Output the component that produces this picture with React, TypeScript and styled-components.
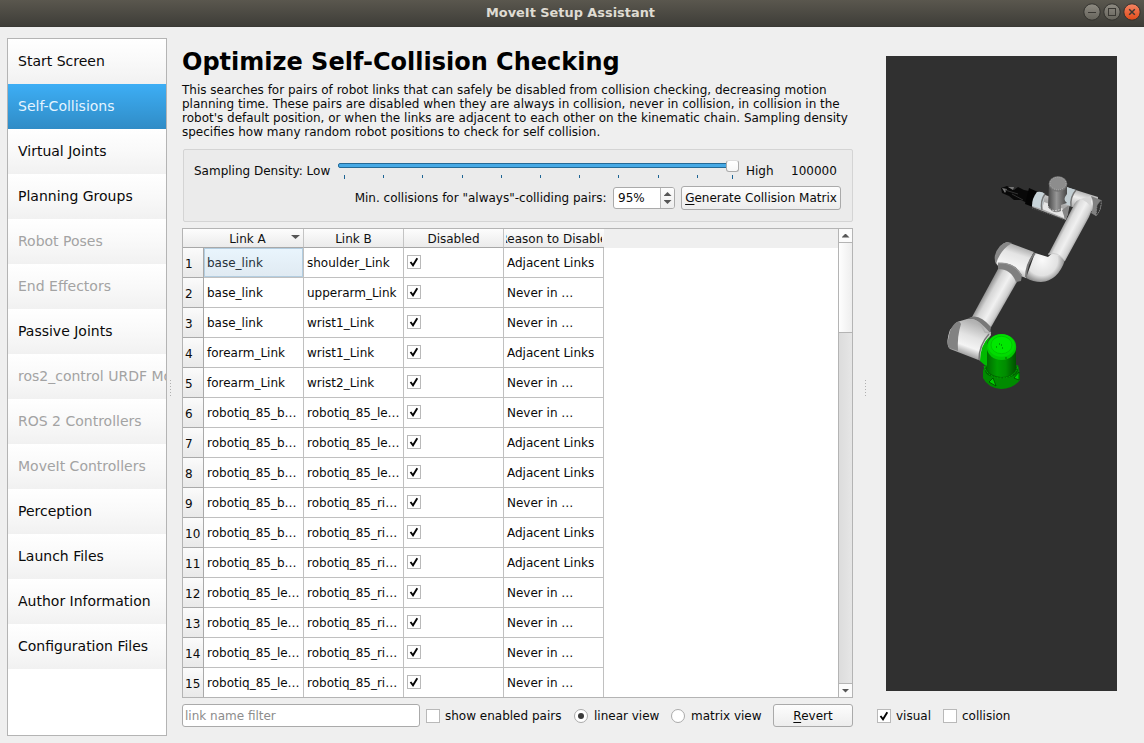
import React from 'react';
import styled, { createGlobalStyle } from 'styled-components';

const GlobalStyle = createGlobalStyle`
  * { box-sizing: border-box; }
  body { margin: 0; background: #efefef; overflow: hidden; }
`;

const Window = styled.div`
  width: 1144px;
  height: 743px;
  display: flex;
  flex-direction: column;
  background: #efefef;
  color: #0a0a0a;
  font: 12px/14px 'DejaVu Sans', sans-serif;
  white-space: nowrap;
`;

const TitleBar = styled.header`
  height: 27px;
  flex: none;
  display: grid;
  grid-template-columns: 1fr auto 1fr;
  padding: 0 3px 2px 0;
  align-items: center;
  background: linear-gradient(#5a574e, #3e3d38);
  border-bottom: 1px solid #3a3935;
  color: #dfdbd2;
  font-weight: bold;
`;

const WindowTitle = styled.span`
  grid-column: 2;
  font-size: 12.9px;
  padding-top: 1px;
`;

const WindowButtons = styled.div`
  display: flex;
  justify-content: flex-end;
  gap: 2px;
`;

const Body = styled.div`
  flex: 1;
  display: flex;
  min-height: 0;
  padding: 11px 27px 0 7px;
`;

const Sidebar = styled.nav`
  width: 160px;
  height: 698px;
  border: 1px solid #b4b4b4;
  background: #fff;
  overflow: hidden;
`;

const NavItem = styled.div<{ $active?: boolean; $muted?: boolean }>`
  height: 45px;
  padding: 0 0 1px 10px;
  display: flex;
  align-items: center;
  font-size: 14px;
  overflow: hidden;
  color: ${(p) => (p.$active ? '#e4f4ff' : p.$muted ? '#a3a3a3' : '#0a0a0a')};
  background: ${(p) =>
    p.$active ? 'linear-gradient(#3daef5, #308cc6)' : 'linear-gradient(#fff, #f9f9f9 50%, #f1f1f1)'};
`;

const Splitter = styled.div<{ $width: number; $left: number }>`
  width: ${(p) => p.$width}px;
  padding: 342px 0 0 ${(p) => p.$left}px;
  flex: none;
`;

const Grip = styled.div`
  width: 1px;
  height: 17px;
  background: repeating-linear-gradient(#b0b0b0 0 1px, transparent 1px 3px);
`;

const Main = styled.main`
  width: 671px;
  display: flex;
  flex-direction: column;
`;

const Heading = styled.h1`
  margin: 0;
  padding-top: 9px;
  height: 45px;
  font-size: 24px;
  line-height: 30px;
  font-weight: bold;
  color: #000;
`;

const Description = styled.p`
  margin: 0;
  height: 56px;
`;

const DensityGroup = styled.section`
  margin: 10px 0 6px 1px;
  height: 73px;
  border: 1px solid #d4d4d4;
  border-radius: 2px;
  background: #ebebeb;
  padding: 9px 11px 0 10px;
`;

const DensityRow = styled.div`
  display: flex;
  height: 27px;
`;

const DensityLabel = styled.span<{ $width: number }>`
  width: ${(p) => p.$width}px;
  padding-top: 5px;
`;

const Slider = styled.div`
  position: relative;
  width: 401px;
  margin-right: 7px;
  padding-top: 4px;
`;

const Track = styled.div`
  height: 5px;
  border: 1px solid #246a97;
  border-radius: 2px;
  background: #46a9e5;
`;

const Handle = styled.div`
  position: absolute;
  right: 0;
  top: 1px;
  width: 13px;
  height: 12px;
  border: 1px solid #aaa;
  border-top-color: #dcdcdc;
  border-radius: 3px;
  background: linear-gradient(#fff, #f6f6f6);
`;

const Ticks = styled.div`
  display: grid;
  grid-template-columns: 39px 39px 40px 39px 39px 39px 39px 40px 39px 35px 1px;
  padding: 7px 0 0 6px;
`;

const Tick = styled.i<{ $long: boolean }>`
  width: 1px;
  height: ${(p) => (p.$long ? 4 : 3)}px;
  background: #1c6494;
`;

const ThresholdRow = styled.div`
  display: flex;
  justify-content: flex-end;
  align-items: center;
  height: 24px;
`;

const SpinBox = styled.div`
  display: flex;
  width: 62px;
  height: 22px;
  margin: 0 6px 0 6.5px;
  border: 1px solid #aaa;
  border-radius: 3px;
  background: #fff;
  overflow: hidden;
`;

const SpinValue = styled.span`
  width: 47px;
  padding: 3px 0 0 4px;
  border-right: 1px solid #b9b9b9;
`;

const SpinArrows = styled.span`
  flex: 1;
  display: flex;
  flex-direction: column;
  align-items: center;
  justify-content: center;
  gap: 4px;
  background: linear-gradient(#fdfdfd, #ededed);
`;

const Arrow = styled.i<{ $up?: boolean }>`
  width: 8px;
  height: 4px;
  background: #555;
  clip-path: ${(p) => (p.$up ? 'polygon(50% 0, 100% 100%, 0 100%)' : 'polygon(0 0, 100% 0, 50% 100%)')};
`;

const PushButton = styled.button<{ $width: number }>`
  width: ${(p) => p.$width}px;
  height: ${(p) => (p.$width > 100 ? 24 : 23)}px;
  padding: 0;
  border: 1px solid #aaa;
  border-radius: 3px;
  background: linear-gradient(#fdfdfd, #ededed);
  color: #0a0a0a;
  font: inherit;
  white-space: nowrap;
`;

const Mnemonic = styled.u`
  text-decoration-thickness: 1px;
  text-underline-offset: 2px;
`;

const TableFrame = styled.section`
  display: flex;
  height: 470px;
  border: 1px solid #b4b4b4;
  background: #fff;
  overflow: hidden;
`;

const TableArea = styled.div`
  flex: 1;
`;

const rowGrid = '21px 100px 100px 100px 100px';

const HeaderRow = styled.div`
  display: grid;
  grid-template-columns: ${rowGrid};
  height: 19px;
  background: #efefef;
`;

const HeaderCell = styled.div<{ $corner?: boolean; $last?: boolean; $sorted?: boolean }>`
  position: relative;
  display: flex;
  justify-content: center;
  overflow: hidden;
  padding: 3px ${(p) => (p.$sorted ? 12 : 0)}px 0 0;
  border-bottom: 1px solid #a8a8a8;
  border-right: ${(p) => (p.$corner || p.$last ? 0 : 1)}px solid #c4c4c4;
  background: linear-gradient(#fdfdfd, #ebebeb);
`;

const HeaderText = styled.span`
  flex: none;
  color: #111;
`;

const ReasonClip = styled.span`
  display: flex;
  justify-content: center;
  width: 96px;
  margin-right: 1px;
  overflow: hidden;
`;

const SortMark = styled(Arrow)`
  position: absolute;
  right: 3px;
  top: 6px;
  width: 9px;
`;

const Row = styled.div`
  display: grid;
  grid-template-columns: ${rowGrid};
  height: 30px;
`;

const RowNumber = styled.div`
  padding: 9px 0 0 2px;
  border-right: 1px solid #aaa;
  border-bottom: 1px solid #aaa;
  background: linear-gradient(#fbfbfb, #e9e9e9);
`;

const Cell = styled.div<{ $selected?: boolean }>`
  padding: 8px 0 0 3px;
  border-right: 1px solid #c0c0c0;
  border-bottom: 1px solid #c0c0c0;
  background: ${(p) => (p.$selected ? 'linear-gradient(#e9f5fd, #e0eaf2)' : '#fff')};
  box-shadow: ${(p) => (p.$selected ? 'inset 0 0 0 1px #b3cde0' : 'none')};
  color: ${(p) => (p.$selected ? '#26313a' : '#0a0a0a')};
`;

const CheckCell = styled(Cell)`
  padding-top: 7px;
`;

const ScrollBar = styled.div`
  width: 14px;
  display: flex;
  flex-direction: column;
  border-left: 1px solid #b4b4b4;
  background: linear-gradient(90deg, #dcdcdc, #e6e6e6);
`;

const ScrollButton = styled.div<{ $bottom?: boolean }>`
  height: 14px;
  display: flex;
  align-items: center;
  justify-content: center;
  background: #fbfbfb;
  border-top: ${(p) => (p.$bottom ? 1 : 0)}px solid #b4b4b4;
  border-bottom: ${(p) => (p.$bottom ? 0 : 1)}px solid #b4b4b4;
`;

const Thumb = styled.div`
  height: 90px;
  margin-bottom: auto;
  border-bottom: 1px solid #b4b4b4;
  background: linear-gradient(90deg, #fefefe, #eee);
`;

const Footer = styled.div`
  display: flex;
  align-items: center;
  height: 23px;
  margin-top: 6px;
`;

const Filter = styled.input`
  width: 238px;
  height: 23px;
  margin-right: 6px;
  padding: 0 2px;
  border: 1px solid #aaa;
  border-radius: 3px;
  background: #fff;
  font: inherit;
  &::placeholder { color: #8c8c8c; opacity: 1; }
`;

const Box = styled.span<{ $round?: boolean }>`
  width: 14px;
  height: 14px;
  flex: none;
  display: flex;
  align-items: center;
  justify-content: center;
  border: 1px solid ${(p) => (p.$round ? '#aaa' : '#b9b9b9')};
  border-radius: ${(p) => (p.$round ? '50%' : '0')};
  background: #fff;
`;

const Dot = styled.i`
  width: 6px;
  height: 6px;
  border-radius: 50%;
  background: #3a3a3a;
`;

const Option = styled.label<{ $width: number; $gap?: number }>`
  display: flex;
  align-items: center;
  gap: ${(p) => p.$gap ?? 5}px;
  width: ${(p) => p.$width}px;
`;

const Preview = styled.aside`
  width: 231px;
  padding-top: 18px;
`;

const Viewport = styled.div`
  height: 635px;
  background: #303030;
`;

const ViewOptions = styled.div`
  display: flex;
  height: 14px;
  margin: 18px 0 0 -9px;
`;

const CheckMark = () => (
  <svg width="12" height="12" viewBox="0 0 12 12" fill="none">
    <path d="M2.5 6 L5 9.3 L9.3 2.2" stroke="#050505" strokeWidth="1.9" />
  </svg>
);

const CheckBox = ({ checked }: { checked?: boolean }) => <Box>{checked && <CheckMark />}</Box>;

const WindowButton = ({ kind }: { kind: 'min' | 'max' | 'close' }) => (
  <svg width="18" height="18" viewBox="0 0 18 18">
    <defs>
      <linearGradient id={`wb-${kind}`} x2="0" y2="1">
        <stop stopColor={kind === 'close' ? '#f58564' : '#8e8b82'} />
        <stop offset="1" stopColor={kind === 'close' ? '#e04a18' : '#65635b'} />
      </linearGradient>
    </defs>
    <circle cx="9" cy="9" r="8.2" fill={`url(#wb-${kind})`} stroke="#33322e" />
    <g fill="none" stroke="#3a3833" strokeWidth="1">
      {kind === 'min' && <path d="M5 9.5H13" />}
      {kind === 'max' && <rect x="5.5" y="5.5" width="7" height="7" />}
      {kind === 'close' && <path d="M6.2 6.2L11.8 11.8M11.8 6.2L6.2 11.8" strokeWidth="1.5" />}
    </g>
  </svg>
);

const Robot = () => (
  <svg width="231" height="635" viewBox="886 56 231 635">
    <defs>
      <linearGradient id="upper" gradientUnits="userSpaceOnUse" x1="983" y1="294" x2="1006" y2="307">
        <stop stopColor="#858585" /><stop offset=".25" stopColor="#d6d6d6" />
        <stop offset=".55" stopColor="#f1f1f1" /><stop offset=".8" stopColor="#cfcfcf" /><stop offset="1" stopColor="#747474" />
      </linearGradient>
      <linearGradient id="fore" gradientUnits="userSpaceOnUse" x1="1060" y1="230" x2="1079" y2="240">
        <stop stopColor="#8f8f8f" /><stop offset=".2" stopColor="#dcdcdc" />
        <stop offset=".5" stopColor="#f0f0f0" /><stop offset=".8" stopColor="#cfcfcf" /><stop offset="1" stopColor="#808080" />
      </linearGradient>
      <linearGradient id="joint" gradientUnits="userSpaceOnUse" x1="1022" y1="246" x2="1012" y2="276">
        <stop stopColor="#a5a5a5" /><stop offset=".3" stopColor="#e4e4e4" />
        <stop offset=".7" stopColor="#f4f4f4" /><stop offset="1" stopColor="#aaa" />
      </linearGradient>
      <radialGradient id="bend" gradientUnits="userSpaceOnUse" cx="1042" cy="260" r="24">
        <stop stopColor="#fafafa" /><stop offset=".65" stopColor="#e2e2e2" /><stop offset="1" stopColor="#7c7c7c" />
      </radialGradient>
      <linearGradient id="shoulder" gradientUnits="userSpaceOnUse" x1="975" y1="323" x2="963" y2="356">
        <stop stopColor="#b3b3b3" /><stop offset=".4" stopColor="#e3e3e3" />
        <stop offset=".7" stopColor="#f4f4f4" /><stop offset="1" stopColor="#8f8f8f" />
      </linearGradient>
      <linearGradient id="wrist" gradientUnits="userSpaceOnUse" x1="1084" y1="189" x2="1078" y2="210">
        <stop stopColor="#9a9a9a" /><stop offset=".45" stopColor="#eee" /><stop offset="1" stopColor="#a8a8a8" />
      </linearGradient>
      <linearGradient id="column" x2="1" y2="0">
        <stop stopColor="#474747" /><stop offset=".45" stopColor="#969696" /><stop offset="1" stopColor="#484848" />
      </linearGradient>
      <linearGradient id="green" x2="1" y2="0">
        <stop stopColor="#006c00" /><stop offset=".35" stopColor="#009c00" />
        <stop offset=".65" stopColor="#008c00" /><stop offset="1" stopColor="#004f00" />
      </linearGradient>
    </defs>

    {/* gripper */}
    <path d="M1001 188L1007 186L1014 190L1018 187L1024 190L1029 191L1027 203L1021 200L1014 200L1009 196L1002 193Z" fill="#080808" />
    <path d="M1002 188L1007 189L1005 193ZM1008 187L1014 187L1013 190ZM1023 187L1027 190" fill="#777" />
    <path d="M1012 194L1023 200M1005 190L1018 194" stroke="#333" fill="none" />
    <path d="M1029 188L1038 192L1033 207L1025 204Z" fill="#040404" />

    {/* tool flange */}
    <path d="M1037 192L1070 204L1066 220L1032 207Z" fill="url(#wrist)" />
    <path d="M1037 192Q1042 191 1045 194L1042 209L1032 206Q1032 198 1037 192Z" fill="#c8d4d9" />
    <path d="M1044 202L1066 210L1064 218L1042 209Z" fill="#e6e6e6" />
    <path d="M1045 194Q1040 201 1042 210" fill="none" stroke="#777" strokeWidth="1.5" />
    <path d="M1062 210L1069 205L1068 215L1065 219Z" fill="#858585" />
    <path d="M1032 208L1065 220" fill="none" stroke="#5a5a5a" strokeDasharray="1 1" />

    {/* wrist joint */}
    <path d="M1066 187L1098 197L1097 212L1076 208L1057 202Z" fill="url(#wrist)" />
    <path d="M1067 187L1076 190Q1070 197 1071 206L1062 203Z" fill="#c2ced3" />
    <path d="M1076 190Q1070 197 1071 206" fill="none" stroke="#777" strokeWidth="1.5" />
    <path d="M1091 196L1101 200Q1103 209 1096 216L1091 213Q1095 204 1091 196Z" fill="#818181" />
    <path d="M1101 200Q1102 209 1096 216L1097 205Z" fill="#303030" stroke="#858585" strokeDasharray="1.5 1" />
    <path d="M1049 184H1067V194Q1062 200 1067 203L1061 205L1061 211Q1054 215 1048 207Z" fill="url(#column)" />
    <ellipse cx="1058" cy="184" rx="9.3" ry="7.8" fill="#747474" />
    <ellipse cx="1058" cy="183.5" rx="8" ry="6.3" fill="#8d8d8d" stroke="#b2b2b2" strokeDasharray="1 1" />
    <path d="M1048 206Q1052 214 1063 208" fill="none" stroke="#ddd" strokeDasharray="1.5 1.5" />

    {/* forearm and elbow bend */}
    <path d="M1035 253L1048 257L1056 250L1065 260Q1058 281 1041 282Q1033 282 1026 278Z" fill="url(#bend)" />
    <path d="M1048 255L1073 207Q1076 198 1084 199L1091 205Q1093 209 1089 217L1065 261Q1058 252 1048 255Z" fill="url(#fore)" />
    <path d="M1048 254Q1058 251 1065 261" fill="none" stroke="#c4c4c4" strokeWidth=".7" />
    <path d="M1080 199Q1087 201 1091 207L1091 196Z" fill="#d6d6d6" />

    {/* elbow */}
    <path d="M1007 242L1034 252Q1026 264 1026 278L1000 268Q993 262 996 255Q1000 244 1007 242Z" fill="url(#joint)" />
    <path d="M1007 242L1012 243Q1000 250 996 264Q992 255 1000 246Q1003 243 1007 242Z" fill="#888" />
    <path d="M1035 253Q1026 264 1026 277" fill="none" stroke="#787878" strokeWidth="2" />

    {/* upper arm */}
    <path d="M998 269Q1011 267 1018 280L990 329L972 317Z" fill="url(#upper)" />
    <path d="M998 263Q1014 261 1022 275L1021 281L1016 282Q1011 269 998 269Z" fill="#7f7f7f" />
    <path d="M998 263Q1014 262 1022 276" fill="none" stroke="#999" />

    {/* shoulder */}
    <path d="M957 322L967 319Q979 316 990 330L991 335Q982 346 981 361L950 349Q945 345 950 330Z" fill="url(#shoulder)" />
    <path d="M957 322Q960 321 961 324Q957 336 958 351L949 348Q946 344 950 331Q953 324 957 322Z" fill="#828282" />
    <path d="M967 319Q976 316 990 333L991 327Q980 314 971 317Z" fill="#777" />
    <path d="M967 320Q979 318 985 332L991 333" fill="none" stroke="#b0b0b0" strokeWidth="1.5" />
    <path d="M989 334Q979 345 979 360" fill="none" stroke="#777" strokeWidth="1.5" />

    {/* base */}
    <path d="M990 336L987 343V367L980 361Q980 345 990 336Z" fill="#00b900" />
    <path d="M985 365Q1001 371 1018 365L1020 374V380Q1013 389 1001 389Q988 388 983 378V371Z" fill="#008b00" />
    <ellipse cx="1001.5" cy="370" rx="16.5" ry="8.5" fill="#006200" />
    <path d="M987 345H1016V371Q1010 377 1001 377Q991 376 987 370Z" fill="url(#green)" />
    <path d="M984 366Q988 378 1001 378Q1015 378 1018 366" fill="none" stroke="#00b000" strokeDasharray="2 1" />
    <path d="M989 382L993 378L996 386ZM1014 378L1019 372V380Z" fill="#00cf00" stroke="#003b00" strokeWidth=".7" />
    <ellipse cx="1001.5" cy="347" rx="14.7" ry="13" fill="#00c800" />
    <ellipse cx="1001.5" cy="345.5" rx="13.3" ry="11.3" fill="#00dc00" />
    <ellipse cx="1001.5" cy="345" rx="10.5" ry="8.7" fill="#00e800" stroke="#00bc00" strokeWidth=".7" />
    <path d="M996 347h1M999 344h1M1002 348h1M1001 345h1M1005 358h2" stroke="#006700" />
  </svg>
);

const steps: [string, boolean?][] = [
  ['Start Screen'], ['Self-Collisions'], ['Virtual Joints'], ['Planning Groups'],
  ['Robot Poses', true], ['End Effectors', true], ['Passive Joints'],
  ['ros2_control URDF Modifications', true], ['ROS 2 Controllers', true], ['MoveIt Controllers', true],
  ['Perception'], ['Launch Files'], ['Author Information'], ['Configuration Files'],
];

const ADJ = 'Adjacent Links';
const NEVER = 'Never in …';
const pairs = [
  ['base_link', 'shoulder_Link', ADJ],
  ['base_link', 'upperarm_Link', NEVER],
  ['base_link', 'wrist1_Link', NEVER],
  ['forearm_Link', 'wrist1_Link', ADJ],
  ['forearm_Link', 'wrist2_Link', NEVER],
  ['robotiq_85_b…', 'robotiq_85_le…', NEVER],
  ['robotiq_85_b…', 'robotiq_85_le…', ADJ],
  ['robotiq_85_b…', 'robotiq_85_le…', ADJ],
  ['robotiq_85_b…', 'robotiq_85_ri…', NEVER],
  ['robotiq_85_b…', 'robotiq_85_ri…', ADJ],
  ['robotiq_85_b…', 'robotiq_85_ri…', ADJ],
  ['robotiq_85_le…', 'robotiq_85_ri…', NEVER],
  ['robotiq_85_le…', 'robotiq_85_ri…', NEVER],
  ['robotiq_85_le…', 'robotiq_85_ri…', NEVER],
  ['robotiq_85_le…', 'robotiq_85_ri…', NEVER],
];

export default function App() {
  return (
    <Window>
      <GlobalStyle />
      <TitleBar>
        <WindowTitle>MoveIt Setup Assistant</WindowTitle>
        <WindowButtons>
          <WindowButton kind="min" />
          <WindowButton kind="max" />
          <WindowButton kind="close" />
        </WindowButtons>
      </TitleBar>
      <Body>
        <Sidebar>
          {steps.map(([name, muted]) => (
            <NavItem key={name} $active={name === 'Self-Collisions'} $muted={muted}>{name}</NavItem>
          ))}
        </Sidebar>
        <Splitter $width={15} $left={3}><Grip /></Splitter>
        <Main>
          <Heading>Optimize Self-Collision Checking</Heading>
          <Description>
            This searches for pairs of robot links that can safely be disabled from collision checking, decreasing motion<br />
            planning time. These pairs are disabled when they are always in collision, never in collision, in collision in the<br />
            robot's default position, or when the links are adjacent to each other on the kinematic chain. Sampling density<br />
            specifies how many random robot positions to check for self collision.
          </Description>
          <DensityGroup>
            <DensityRow>
              <DensityLabel $width={144}>Sampling Density: Low</DensityLabel>
              <Slider>
                <Track />
                <Ticks>
                  {Array.from({ length: 11 }, (_, i) => <Tick key={i} $long={i === 0 || i === 10} />)}
                </Ticks>
                <Handle />
              </Slider>
              <DensityLabel $width={45}>High</DensityLabel>
              <DensityLabel $width={48}>100000</DensityLabel>
            </DensityRow>
            <ThresholdRow>
              <span>Min. collisions for "always"-colliding pairs:</span>
              <SpinBox>
                <SpinValue>95%</SpinValue>
                <SpinArrows><Arrow $up /><Arrow /></SpinArrows>
              </SpinBox>
              <PushButton $width={160}><Mnemonic>G</Mnemonic>enerate Collision Matrix</PushButton>
            </ThresholdRow>
          </DensityGroup>
          <TableFrame>
            <TableArea>
              <HeaderRow>
                <HeaderCell $corner />
                <HeaderCell $sorted><HeaderText>Link A</HeaderText><SortMark /></HeaderCell>
                <HeaderCell><HeaderText>Link B</HeaderText></HeaderCell>
                <HeaderCell><HeaderText>Disabled</HeaderText></HeaderCell>
                <HeaderCell $last><ReasonClip><HeaderText>Reason to Disable</HeaderText></ReasonClip></HeaderCell>
              </HeaderRow>
              {pairs.map(([a, b, reason], i) => (
                <Row key={i}>
                  <RowNumber>{i + 1}</RowNumber>
                  <Cell $selected={i === 0}>{a}</Cell>
                  <Cell>{b}</Cell>
                  <CheckCell><CheckBox checked /></CheckCell>
                  <Cell>{reason}</Cell>
                </Row>
              ))}
            </TableArea>
            <ScrollBar>
              <ScrollButton><Arrow $up /></ScrollButton>
              <Thumb />
              <ScrollButton $bottom><Arrow /></ScrollButton>
            </ScrollBar>
          </TableFrame>
          <Footer>
            <Filter placeholder="link name filter" />
            <Option $width={148}><CheckBox />show enabled pairs</Option>
            <Option $width={97} $gap={6}><Box $round><Dot /></Box>linear view</Option>
            <Option $width={102} $gap={6}><Box $round />matrix view</Option>
            <PushButton $width={80}><Mnemonic>R</Mnemonic>evert</PushButton>
          </Footer>
        </Main>
        <Splitter $width={33} $left={12}><Grip /></Splitter>
        <Preview>
          <Viewport><Robot /></Viewport>
          <ViewOptions>
            <Option $width={66}><CheckBox checked />visual</Option>
            <Option $width={80}><CheckBox />collision</Option>
          </ViewOptions>
        </Preview>
      </Body>
    </Window>
  );
}
